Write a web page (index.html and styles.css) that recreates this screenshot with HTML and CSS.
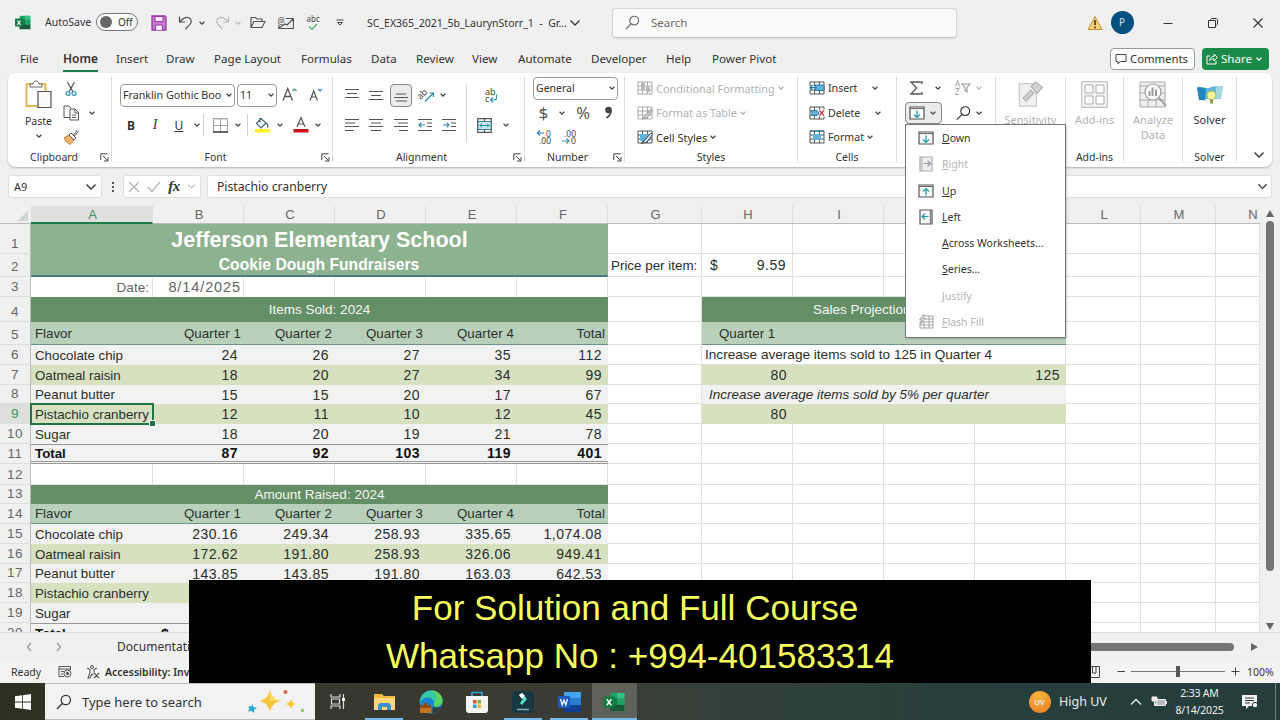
FILE: index.html
```html
<!DOCTYPE html>
<html lang="en">
<head>
<meta charset="utf-8">
<title>SC_EX365_2021_5b_LaurynStorr_1 - Excel</title>
<link rel="stylesheet" href="styles.css">
</head>
<body>
<svg class="defs" aria-hidden="true">
  <symbol id="chev" viewBox="0 0 8 8"><path d="M1.6 2.8 4 5.2 6.4 2.8" fill="none" stroke="currentColor" stroke-width="1.3"/></symbol>
  <symbol id="chevL" viewBox="0 0 12 12"><path d="M1.5 3.5 6 8 10.500 3.500" fill="none" stroke="currentColor" stroke-width="1.3"/></symbol>
  <symbol id="launch" viewBox="0 0 9 9"><path d="M.8 7V.8H7.500M3 3l4.600 4.600M8 4v4H4" fill="none" stroke="#444"/></symbol>
  <symbol id="excel" viewBox="0 0 24 22"><path d="M7 1h16v20H7z" fill="#21a366"/><path d="M15 1h7a1 1 0 0 1 1 1v5h-8z" fill="#33c481"/><path d="M7 7h8v7H7z" fill="#107c41"/><path d="M7 14h16v7H7z" fill="#185c37"/><path d="M15 7h8v7h-8z" fill="#21a366"/><rect y="5" width="12" height="12" rx="1" fill="#107c41"/><path d="m3.500 8 5 6.500M8.500 8l-5 6.500" stroke="#fff" stroke-width="1.600"/></symbol>
  <symbol id="fillDown" viewBox="0 0 16 14"><path d="M1 1h14v12H1z" fill="#fafafa" stroke="#555" stroke-width="1.200"/><path d="M1 2.600h14" stroke="#666"/><path d="M8 4.500v7M5 8.500l3 3 3-3" fill="none" stroke="#1b98a8" stroke-width="1.200"/></symbol>
  <symbol id="fillUp" viewBox="0 0 16 14"><path d="M1 1h14v12H1z" fill="#fafafa" stroke="#555" stroke-width="1.200"/><path d="M1 2.500h14" stroke="#666"/><path d="M8 11.500v-7M5 7.500l3-3 3 3" fill="none" stroke="#1b98a8" stroke-width="1.200"/></symbol>
  <symbol id="fillLeft" viewBox="0 0 14 16"><path d="M1 1h12v14H1z" fill="#fafafa" stroke="#555" stroke-width="1.200"/><path d="M11.500 1v14" stroke="#888" stroke-width="1.500"/><path d="M9.500 7.500H3M6 4.500l-3 3 3 3" fill="none" stroke="#1b98a8" stroke-width="1.200"/></symbol>
  <symbol id="fillRight" viewBox="0 0 14 16"><path d="M1 1h12v14H1z" fill="#f1f1f1" stroke="#aaa" stroke-width="1.200"/><path d="M3 1v14" stroke="#aaa"/><path d="M4.500 7.500h7M8.500 4.500l3 3-3 3" fill="none" stroke="#999" stroke-width="1.200"/></symbol>
  <symbol id="flash" viewBox="0 0 16 16"><path d="M7 2h8v12H2V8h13M6 8v6M11 2v12M2 11h13M7 5h8" fill="none" stroke="#a5a5a5"/><path d="M5 1 1.500 6H4L2.500 10 7.500 4.500H5L7 1z" fill="#ddd" stroke="#999" stroke-width=".8"/></symbol>
  <symbol id="table" viewBox="0 0 16 14"><path d="M1 1h14v12H1zM1 5h14M1 9h14M5.500 1v12M10.500 1v12" fill="none" stroke="currentColor"/></symbol>
  <symbol id="mag" viewBox="0 0 16 16"><circle cx="9.800" cy="6" r="4.700" fill="none" stroke="currentColor" stroke-width="1.200"/><path d="M6.400 9.500 1 15" stroke="currentColor" stroke-width="1.300"/></symbol>
</svg>

<header class="titlebar">
  <svg class="mid" width="16" height="15"><use href="#excel"/></svg>
  <span class="autosave">AutoSave</span>
  <span class="toggle mid"><i></i>Off</span>
  <svg class="mid" width="16" height="16" viewBox="0 0 16 16"><path d="M1 1h13l1 1v13H1z" fill="#c77bd0" stroke="#93389f" stroke-width="1.300"/><path d="M4 1.500h8v5H4z" fill="#f7e9f9" stroke="#93389f"/><path d="M4.500 15v-5h7v5" fill="#f7e9f9" stroke="#93389f"/></svg>
  <svg class="mid" width="16" height="16" viewBox="0 0 16 16"><path d="M1.500 1.500v5.500H7M1.800 6.800C5 2.500 10 1 12.500 4c2.500 3.300-.5 5.500-5 10" fill="none" stroke="#505050" stroke-width="1.200"/></svg>
  <svg class="mid ch"><use href="#chev"/></svg>
  <svg class="mid" width="16" height="16" viewBox="0 0 16 16"><path d="M14.500 1.500v5.500H9M14.200 6.800C11 2.500 6 1 3.500 4 1 7.300 4 9.500 8.500 14" fill="none" stroke="#b9b9b9" stroke-width="1.200"/></svg>
  <svg class="mid ch dim"><use href="#chev"/></svg>
  <svg class="mid" width="16" height="13" viewBox="0 0 16 13"><path d="M1 11.500v-10h4.500L7 3h5v2.500M1 11.500l3-6h11l-3 6z" fill="none" stroke="#505050" stroke-width="1.100"/></svg>
  <svg class="mid" width="16" height="14" viewBox="0 0 16 14"><path d="M8 2.500h7.400v10H.8V9M1 12l6-4 2 1 6-6" fill="none" stroke="#505050" stroke-width="1.100"/><text x="-.5" y="8" class="at">@</text></svg>
  <svg class="mid" width="16" height="18" viewBox="0 0 16 18"><text x="1.500" y="8" class="abc">abc</text><path d="m4 12.500 3 3 5-5.500" fill="none" stroke="#4aae68" stroke-width="1.200"/></svg>
  <svg class="mid" width="8" height="8" viewBox="0 0 8 8"><path d="M.5 1h7M1.500 3.500 4 6l2.500-2.500z" fill="none" stroke="#444"/></svg>
  <i></i>
  <span class="docname">SC_EX365_2021_5b_LaurynStorr_1&nbsp; -&nbsp; Gr...</span>
  <svg class="mid" width="12" height="12"><use href="#chevL"/></svg>
  <i></i>
  <div class="search"><svg width="15" height="15"><use href="#mag"/></svg><span>Search</span></div>
  <i></i>
  <svg class="mid" width="16" height="16" viewBox="0 0 16 16"><path d="M8 1.500 15 14.500H1z" fill="#f6d27a" stroke="#c98a2b"/><path d="M8 5v5M8 11.500v1.800" stroke="#333" stroke-width="1.600"/></svg>
  <span class="avatar mid">P</span>
  <i></i>
  <svg class="mid" width="10" height="10"><path d="M.5 5.500h9" stroke="#333"/></svg>
  <svg class="mid" width="10" height="10" viewBox="0 0 10 10"><path d="M.5 2.500h7v7h-7zM2.500 2.500V1.500l1-1h5l1 1v5l-1 1h-1" fill="none" stroke="#333"/></svg>
  <svg class="mid" width="10" height="10" viewBox="0 0 10 10"><path d="m.5.5 9 9m0-9-9 9" stroke="#333" stroke-width="1.100"/></svg>
</header>

<nav class="tabs">
  <span>File</span><span class="active">Home</span><span>Insert</span><span>Draw</span><span>Page Layout</span><span>Formulas</span><span>Data</span><span>Review</span><span>View</span><span>Automate</span><span>Developer</span><span>Help</span><span>Power Pivot</span>
  <div class="btn comments"><svg width="12" height="12" viewBox="0 0 12 12"><path d="M1 1.500h10v7H5.500L3 10.800V8.500H1z" fill="none" stroke="#444"/></svg>Comments</div>
  <div class="btn share"><svg width="12" height="13" viewBox="0 0 12 13"><path d="M4 4H1v8h9V9M3.500 8.500c.5-3 2.500-4 4.500-4V2l3.500 3.500L8 9V6.800c-2 0-3.500.5-4.500 1.700z" fill="none" stroke="#fff"/></svg>Share<svg class="ch"><use href="#chev"/></svg></div>
</nav>

<section class="ribbon">
  <div class="group clipboard">
    <div class="clip">
      <div class="big">
        <svg width="27" height="29" viewBox="0 0 27 29"><path d="M1.500 4h19v22h-19z" fill="#fff" stroke="#e8b65a" stroke-width="2"/><path d="M5 7V4h3c0-4 6-4 6 0h3v3z" fill="#fff" stroke="#666"/><path d="M13 11.500h13v16H13z" fill="#fafafa" stroke="#555" stroke-width="1.200"/></svg>
        <span>Paste</span><svg class="ch"><use href="#chev"/></svg>
      </div>
      <div class="small">
        <svg width="12" height="16" viewBox="0 0 12 16"><path d="m2.500 1 5.500 10M9.500 1 4 11" stroke="#555" stroke-width="1.200"/><circle cx="3" cy="12.500" r="2" fill="none" stroke="#2c8fc0" stroke-width="1.200"/><circle cx="9" cy="12.500" r="2" fill="none" stroke="#2c8fc0" stroke-width="1.200"/></svg><i></i>
        <svg width="16" height="16" viewBox="0 0 16 16"><path d="M7 12.500H1V1h5l2 2M7 4h5l3.500 3.500V15H7zM12 4v4h3.500M9 10h4M9 12.500h4" fill="none" stroke="#555"/></svg><svg class="ch"><use href="#chev"/></svg>
        <svg width="16" height="16" viewBox="0 0 16 16"><path d="M1 9 6 6l5 5-4 4.500c-2-1-4.500-3-6-6.500z" fill="#f3b56d" stroke="#cf7a22"/><path d="m6 6 5 5 2-2-5-5zM10.500 6 14 1.500l1.300 1.300L11.500 7z" fill="#fff" stroke="#555"/></svg><i></i>
      </div>
    </div>
    <div class="label">Clipboard</div><svg class="launch"><use href="#launch"/></svg>
  </div>

  <div class="group font two">
    <div class="r fr1"><span class="box">Franklin Gothic Boo<svg class="ch"><use href="#chev"/></svg></span><span class="box">11<svg class="ch"><use href="#chev"/></svg></span>
      <svg class="mid" width="16" height="16" viewBox="0 0 16 16"><path d="m1 13.500 4.700-12 4.700 12M2.700 9.500h6" fill="none" stroke="#555" stroke-width="1.300"/><path d="m10.500 4 2-2 2 2" fill="none" stroke="#2b88b0" stroke-width="1.100"/></svg>
      <svg class="mid" width="14" height="16" viewBox="0 0 14 16"><path d="m1 13.500 3.700-9.500 3.700 9.500M2.500 10h4.500" fill="none" stroke="#555" stroke-width="1.200"/><path d="m9 2 2 2 2-2" fill="none" stroke="#2b88b0" stroke-width="1.100"/></svg></div>
    <div class="r fr2"><b class="mid">B</b><em class="mid">I</em><u class="mid">U</u><svg class="mid ch"><use href="#chev"/></svg><i class="vs"></i>
      <svg class="mid" width="15" height="15" viewBox="0 0 15 15"><path d="M.5.5h14v13M.5.5v13M7.500.5v13M.5 7.500h14" fill="none" stroke="#777" stroke-dasharray="1 1"/><path d="M.5 1.500v12M14.500 1.500v12M7.500 1v13M1 7.500h13M1 1h13" fill="none" stroke="#999" stroke-width=".7"/><path d="M0 14h15" stroke="#333" stroke-width="1.500"/></svg>
      <svg class="mid ch"><use href="#chev"/></svg><i class="vs"></i>
      <svg class="mid" width="16" height="16" viewBox="0 0 16 16"><path d="M7 1.500 12 6l-5 5-4.500-4.500zM6 1v4M12 6c2 1 2 3 1.500 4.500" fill="none" stroke="#3b6577" stroke-width="1.200"/><path d="M1 12h15v3.500H1z" fill="#f8f32b"/></svg>
      <svg class="mid ch"><use href="#chev"/></svg>
      <svg class="mid" width="16" height="16" viewBox="0 0 16 16"><path d="m4 10 4-9.500L12 10M5.500 7h5" fill="none" stroke="#555" stroke-width="1.200"/><path d="M.5 12h15v3.500H.5z" fill="#c4141c"/></svg>
      <svg class="mid ch"><use href="#chev"/></svg></div>
    <div class="label">Font</div><svg class="launch"><use href="#launch"/></svg>
  </div>

  <div class="group align two">
    <div class="r al1">
      <svg class="mid ln" viewBox="0 0 14 14"><path d="M0 1.500h14M2 5.500h10M0 9.500h14"/></svg>
      <svg class="mid ln" viewBox="0 0 14 14"><path d="M0 3.500h14M2 7.500h10M0 11.500h14"/></svg>
      <span class="mid pressed"><svg class="ln" viewBox="0 0 14 14"><path d="M2 6h10M0 9.500h14M2 13h11"/></svg></span>
      <svg class="mid" width="17" height="16" viewBox="0 0 17 16"><text x="-1" y="9" class="ab" transform="rotate(-45 5 8)">ab</text><path d="M6 14.500 14.500 6M10.500 6h4v4" fill="none" stroke="#2b88b0" stroke-width="1.200"/></svg>
      <svg class="mid ch"><use href="#chev"/></svg><i></i>
      <svg class="mid" width="14" height="17" viewBox="0 0 14 17"><text x="1" y="7.500" class="ab">ab</text><text x="1" y="15" class="ab">c</text><path d="M12.500 7.500v3.500c0 1.500-1 2-2.500 2H6.500M9 10.500 6.500 13l2.500 2.500" fill="none" stroke="#2b9ab0" stroke-width="1.100"/></svg></div>
    <div class="r al2">
      <svg class="mid ln" viewBox="0 0 14 14"><path d="M0 1.500h14M0 5h10M0 8.500h14M0 12.500h9"/></svg>
      <svg class="mid ln" viewBox="0 0 14 14"><path d="M0 1.500h14M2 5h10M0 8.500h14M2 12.500h10"/></svg>
      <svg class="mid ln" viewBox="0 0 14 14"><path d="M0 1.500h14M4 5h10M0 8.500h14M5 12.500h9"/></svg>
      <svg class="mid ln" viewBox="0 0 14 14"><path d="M0 1.500h14M9 5h5M9 8.500h5M0 12.500h14"/><path class="bl" d="M7 7H1m2.300-2.300L1 7l2.300 2.300"/></svg>
      <svg class="mid ln" viewBox="0 0 14 14"><path d="M0 1.500h14M9 5h5M9 8.500h5M0 12.500h14"/><path class="bl" d="M1 7h6M4.700 4.700 7 7 4.700 9.300"/></svg><i></i>
      <svg class="mid" width="15" height="15" viewBox="0 0 15 15"><path d="M.7.7h13.600v13.600H.7zM7.500 1v2M7.500 12v2" fill="#fff" stroke="#555" stroke-width="1.200"/><path d="M1 3.500h13v8H1z" fill="#cdeaf3" stroke="#3c7d90"/><path d="M3 7.500h9M5 5.500l-2 2 2 2M10 5.500l2 2-2 2" fill="none" stroke="#1b87a0"/></svg>
      <svg class="mid ch"><use href="#chev"/></svg></div>
    <i class="vline"></i>
    <div class="label">Alignment</div><svg class="launch"><use href="#launch"/></svg>
  </div>

  <div class="group number three">
    <div class="r nu1"><span class="box">General<svg class="ch"><use href="#chev"/></svg></span></div>
    <div class="r nu2"><span class="mid sym">$</span><svg class="mid ch"><use href="#chev"/></svg><span class="mid sym">%</span><svg class="mid" width="9" height="14" viewBox="0 0 9 14"><circle cx="4.500" cy="4" r="3.300" fill="#444"/><path d="M7 4.500c0 3-1.500 5.500-4.500 7.500" fill="none" stroke="#444" stroke-width="1.700"/></svg></div>
    <div class="r nu3"><svg class="mid" width="16" height="16" viewBox="0 0 16 16"><text x="10" y="7.500" class="dg">0</text><text x="3" y="15" class="dg">.00</text><path d="M8 4H1.500M4 1.500 1.500 4 4 6.500" fill="none" stroke="#2b88b0" stroke-width="1.200"/></svg><svg class="mid" width="16" height="16" viewBox="0 0 16 16"><text x="3" y="7.500" class="dg">.00</text><text x="10" y="15" class="dg">0</text><path d="M1 12h7M5.500 9.500 8 12l-2.500 2.500" fill="none" stroke="#2b9ab0" stroke-width="1.200"/></svg></div>
    <div class="label">Number</div><svg class="launch"><use href="#launch"/></svg>
  </div>

  <div class="group styles three">
    <div class="r item off"><svg width="16" height="14" viewBox="0 0 16 14"><use href="#table"/><path d="M4 2h4v7H4zM9 6h4v5H9z" fill="#b5b5b5"/></svg><span>Conditional Formatting</span><svg class="ch"><use href="#chev"/></svg></div>
    <div class="r item off"><svg width="16" height="14" viewBox="0 0 16 14"><use href="#table"/><path d="M8 10 14 3l1.500 1.500L10 12l-5 1z" fill="#ccc" stroke="#999"/></svg><span>Format as Table</span><svg class="ch"><use href="#chev"/></svg></div>
    <div class="r item"><svg width="16" height="14" viewBox="0 0 16 14"><use href="#table"/><path d="M3 4h10v7H3z" fill="#5fb4dc"/><path d="M7 11 14 3l1.500 1.500L10 12l-6 1.500z" fill="#d9eef8" stroke="#444"/></svg><span>Cell Styles</span><svg class="ch"><use href="#chev"/></svg></div>
    <div class="label">Styles</div>
  </div>

  <div class="group cells three">
    <div class="r item"><svg width="16" height="14" viewBox="0 0 16 14"><use href="#table"/><path d="M6 4h9v5.500H6z" fill="#5fb4dc" stroke="#2b7da0"/><path d="M0 5h5.500v3.500H0z" fill="#fff"/><path d="M8 6.700H1M3.500 4.200 1 6.700l2.500 2.500" fill="none" stroke="#1779a5" stroke-width="1.200"/></svg><span>Insert</span><svg class="ch w1"><use href="#chev"/></svg></div>
    <div class="r item"><svg width="16" height="14" viewBox="0 0 16 14"><use href="#table"/><path d="M8 3.500h8v7H8z" fill="#fff"/><path d="M3 4.500h5L10 7 8 9.500H3z" fill="#5fb4dc" stroke="#2b7da0"/><path d="m10.500 4.500 4.500 5m0-5-4.500 5" stroke="#d13438" stroke-width="1.200"/></svg><span>Delete</span><svg class="ch w2"><use href="#chev"/></svg></div>
    <div class="r item"><svg width="16" height="14" viewBox="0 0 16 14"><use href="#table"/><path d="M4 4h8v6H4z" fill="#5fb4dc"/><path d="M2 1h12M2 0v2M14 0v2" stroke="#1779a5"/></svg><span>Format</span><svg class="ch w3"><use href="#chev"/></svg></div>
    <div class="label">Cells</div>
  </div>

  <div class="group editing three">
    <div class="r ed"><svg class="mid" width="13" height="14" viewBox="0 0 13 14"><path d="M12 3V1H1l5.500 6L1 13h11v-2" fill="none" stroke="#555" stroke-width="1.300"/></svg><svg class="mid ch"><use href="#chev"/></svg>
      <svg class="mid" width="16" height="16" viewBox="0 0 16 16"><text x="0" y="7" class="az">A</text><text x="0" y="15" class="az">Z</text><path d="M7 4h8l-3 3.500V12l-2-1.500v-3z" fill="none" stroke="#999" stroke-width="1.100"/></svg><svg class="mid ch dim"><use href="#chev"/></svg></div>
    <div class="r ed2"><span class="fillbtn"><svg width="16" height="14"><use href="#fillDown"/></svg><svg class="ch"><use href="#chev"/></svg></span>
      <svg class="mid" width="15" height="16"><use href="#mag"/></svg><svg class="mid ch"><use href="#chev"/></svg></div>
  </div>

  <div class="group tall off">
    <svg width="27" height="30" viewBox="0 0 27 30"><path d="M1 3h19v25H1z" fill="#f0f0f0" stroke="#bbb"/><path d="m5 19 9-9 3.500 3.500-9 9z" fill="#ccc" stroke="#999"/><path d="m14 6 5-5 8 6-6 7z" fill="#ccc" stroke="#999"/><path d="m17 8 4-5M20 10l4-5" stroke="#eee"/></svg><span>Sensitivity</span></div>
  <div class="group tall off">
    <svg width="27" height="27" viewBox="0 0 27 27"><path d="M.7.7h25.600v25.600H.7z" fill="#f5f5f5" stroke="#b5b5b5"/><path d="M4 4h8v8H4zM15 4h8v8h-8zM4 15h8v8H4zM15 15h8v8h-8z" fill="#fff" stroke="#aaa"/></svg><span>Add-ins</span><div class="label">Add-ins</div></div>
  <div class="group tall off">
    <svg width="28" height="27" viewBox="0 0 28 27"><path d="M1 1h25v25H1zM1 5h25M1 12h25M1 19h25M9 19v7M17 19v7" fill="#eee" stroke="#aaa"/><circle cx="14" cy="11" r="8" fill="#fff" stroke="#999" stroke-width="1.200"/><path d="M10.500 10v5M13.500 6.500V15M17 8.500V15" stroke="#999" stroke-width="2"/><path d="m20 17 7 8" stroke="#999" stroke-width="1.800"/></svg><span>Analyze<br>Data</span></div>
  <div class="group tall">
    <svg width="28" height="26" viewBox="0 0 28 26"><path d="M1 6c6-2 9 2 13 0s8-1 13-1l-2 12c-6 2-7-2-12 0s-6 1-9 1z" fill="#65b9dc"/><path d="M1 6c4-1 7 1 9 1l-1 12c-2 0-3-1-6 0z" fill="#2387bf"/><path d="M20 6c3-1 5-1 7-1l-2 12-5 0z" fill="#a4d8e6"/><circle cx="15.500" cy="14" r="4.500" fill="#eef29a" stroke="#a9b84d"/><path d="M14 18h3v4h-3z" fill="#8c9b55"/></svg><span>Solver</span><div class="label">Solver</div></div>
  <div class="tail"><svg width="12" height="12"><use href="#chevL"/></svg></div>
</section>

<section class="formulabar">
  <div class="fb name">A9<svg width="12" height="12"><use href="#chevL"/></svg></div>
  <svg class="mid" width="4" height="12"><path d="M1 1h2v2H1zM1 5h2v2H1zM1 9h2v2H1z" fill="#555"/></svg>
  <div class="fb fx"><svg width="12" height="12" viewBox="0 0 12 12"><path d="m1 1 10 10M11 1 1 11" stroke="#b0b0b0" stroke-width="1.200"/></svg><svg width="14" height="12" viewBox="0 0 14 12"><path d="m1 6 4 4.500L13 1" fill="none" stroke="#b0b0b0" stroke-width="1.200"/></svg><em>fx</em><svg class="lt" width="9" height="9"><use href="#chevL"/></svg></div>
  <div class="fb text">Pistachio cranberry<svg width="11" height="11"><use href="#chevL"/></svg></div>
</section>

<main class="work">
  <div class="sheet" id="sheet"></div>
  <div class="vscroll"><svg width="8" height="7"><path d="M0 7 4 0l4 7z" fill="#666"/></svg><i></i><svg width="8" height="7"><path d="M0 0h8L4 7z" fill="#666"/></svg></div>
</main>

<div class="sheetbar">
  <svg width="6" height="10"><path d="M5 1 1.500 5 5 9" fill="none" stroke="#999" stroke-width="1.300"/></svg>
  <svg width="6" height="10"><path d="m1 1 3.500 4L1 9" fill="none" stroke="#999" stroke-width="1.300"/></svg>
  <span>Documentation</span>
  <i class="hthumb"></i><svg width="7" height="8"><path d="M0 0v8l7-4z" fill="#666"/></svg>
</div>

<div class="status">
  <span>Ready</span>
  <svg class="mid" width="14" height="13" viewBox="0 0 14 13"><path d="M6 11.500H1v-10h11.500V5M1 4h11.500M3 6.500h3M3 9h2" fill="none" stroke="#555"/><circle cx="9.500" cy="8.500" r="3.500" fill="#eee" stroke="#555"/><circle cx="9.500" cy="8.500" r="1.500" fill="#444"/></svg>
  <svg class="mid" width="14" height="14" viewBox="0 0 14 14"><circle cx="6" cy="2" r="1.500" fill="none" stroke="#555"/><path d="m1 3 3 1.500v3L2 13h2l2-4 1 1M11 3 8 4.500v3M8 8l5 5m0-5-5 5" fill="none" stroke="#555" stroke-width="1.100"/></svg>
  <b>Accessibility: Investigate</b>
  <i></i>
  <svg width="12" height="12"><path d="M.5.5h11v11H.5zM4.500 1v6H8V1" fill="none" stroke="#444"/></svg>
  <svg class="mid" width="9" height="9"><path d="M.5 4.500H8" stroke="#444"/></svg>
  <span class="zoomer"><i></i></span>
  <svg class="mid" width="9" height="9"><path d="M.5 4.500h8M4.500.5v8" stroke="#444"/></svg>
  <span class="pct">100%</span>
</div>

<footer class="taskbar">
  <svg class="mid" width="16" height="16" viewBox="0 0 16 16"><path d="m0 2.300 7-1v6.300H0zM7.800 1.200 16 0v7.600H7.800zM0 8.400h7v6.300l-7-1zM7.800 8.400H16V16l-8.200-1.200z" fill="#fff"/></svg>
  <div class="tsearch"><svg width="16" height="16"><use href="#mag"/></svg><span>Type here to search</span>
    <svg width="60" height="24" viewBox="0 0 60 24"><path d="M23 0c2 7 4 9 10.500 11-6.500 2-8.500 4-10.500 11-2-7-4-9-10.500-11C19 9 21 7 23 0z" fill="#f4c637"/><path d="M23 0c2 7 4 9 10.500 11H23z" fill="#fbdc6a"/><path d="M44 9c1 3 2 4 5 5-3 1-4 2-5 5-1-3-2-4-5-5 3-1 4-2 5-5z" fill="#f4c637"/><path d="m5 14 1.500 3 3.500 1-3 2v3l-2.500-2L1 21.500l1.500-3-1-2.500 3 .5z" fill="#2aa8d8"/><circle cx="38.500" cy="2" r="2" fill="#d8664b"/><circle cx="55.500" cy="20.500" r="1.700" fill="#92c46d"/></svg></div>
  <svg class="mid" width="16" height="15" viewBox="0 0 16 15"><path d="M1 0v3h9V0M1 15v-3h9v3M1.500 5h8v5h-8zM13.500 0v15" fill="none" stroke="#ddd" stroke-width="1.200"/><path d="M12 4h3v3h-3z" fill="#eee"/></svg>
  <span class="app on w38"><svg width="21" height="18" viewBox="0 0 21 18"><path d="M0 1h8l2 2h11v14H0z" fill="#f0b93c"/><path d="M0 5h21v12H0z" fill="#fcd879"/><path d="M4 17v-5l2-2h9l2 2v5h-4v-3H8v3z" fill="#3893cf"/></svg></span>
  <span class="app"><svg width="24" height="24" viewBox="0 0 24 24"><circle cx="12" cy="12" r="11.500" fill="#1a84d1"/><path d="M1 10C3 3 8 .5 12 .5c7 0 11.500 5 11.500 10 0 4-3 6-6 6-4 0-3-2-2.500-4 0-3-3-5-6-5-4 0-7 2-8 6z" fill="#38c9a4"/><path d="M12 .5c7 0 11.500 5 11.500 10 0 4-3 6-6 6-3 0-2-2-2-3 4-5 1-11-3.500-13z" fill="#5ad45a"/><path d="M14 16c2 2 5 2 8.500.500C20 21 17 23.500 13 23.500z" fill="#35403a"/><path d="M1 15h11v8H1z" fill="#c4771f"/><path d="M1 15h11v3H1zM5 13h3v2H5z" fill="#8b4f16"/></svg></span>
  <span class="app"><svg width="22" height="22" viewBox="0 0 22 22"><path d="M6 5V1.500h10V5" fill="none" stroke="#2aa6d2" stroke-width="1.700"/><path d="M0 5h22v14q0 3-3 3H3q-3 0-3-3z" fill="#f4f4f4"/><path d="M7 9h3.500v3.500H7z" fill="#e2512b"/><path d="M11.500 9H15v3.500h-3.500z" fill="#78b52b"/><path d="M7 13.500h3.500V17H7z" fill="#2a9fdb"/><path d="M11.500 13.500H15V17h-3.500z" fill="#f1b41d"/></svg></span>
  <span class="app on w38"><svg width="22" height="22" viewBox="0 0 22 22"><rect width="22" height="22" rx="4" fill="#173743"/><path d="m7 4 3-2 5 6-5 6-2-2 3-4z" fill="#5be1c6"/><path d="m7 4 3-2 3 3-3 3z" fill="#fff"/><path d="M5 18.500h12" stroke="#8ab0be" stroke-width="1.500"/></svg></span>
  <span class="app on w38"><svg width="23" height="20" viewBox="0 0 23 20"><path d="M6 0h16l1 1v18l-1 1H6z" fill="#2b7cd3"/><path d="M6 0h16l1 1v5H6z" fill="#41a5ee"/><path d="M6 13h17v6l-1 1H6z" fill="#103f91"/><rect y="4" width="12" height="12" rx="1" fill="#185abd"/><path d="m2.500 7 1.700 6L6 8l1.800 5 1.700-6" fill="none" stroke="#fff" stroke-width="1.200"/></svg></span>
  <span class="app on cur"><svg width="23" height="20"><use href="#excel"/></svg></span>
  <i></i>
  <span class="uv mid">UV</span><span class="wx">High UV</span>
  <svg class="mid" width="12" height="12"><path d="m1 8.500 5-5 5 5" fill="none" stroke="#eee" stroke-width="1.300"/></svg>
  <svg class="mid" width="15" height="12" viewBox="0 0 15 12"><path d="M4.500 3.500h9v6h-9z" fill="#bbb" stroke="#eee"/><path d="M0 1h5v4H0zM2.500 5v4.500H5M14.500 5v3" fill="#eee" stroke="#eee"/></svg>
  <div class="clock">2:33 AM<br>8/14/2025</div>
  <svg class="mid" width="16" height="16" viewBox="0 0 16 16"><path d="M0 1h15v11H7l-3 3v-3H0z" fill="#f2f2f2"/><path d="M3 4h9M3 6.500h9M3 9h5" stroke="#263f3c"/><circle cx="13" cy="11" r="2.700" fill="#f2f2f2" stroke="#263f3c"/></svg>
  <i class="peek"></i>
</footer>

<div class="menu">
  <div><svg width="16" height="14"><use href="#fillDown"/></svg><span><u>D</u>own</span></div>
  <div class="off"><svg width="14" height="16"><use href="#fillRight"/></svg><span><u>R</u>ight</span></div>
  <div><svg width="16" height="14"><use href="#fillUp"/></svg><span><u>U</u>p</span></div>
  <div><svg width="14" height="16"><use href="#fillLeft"/></svg><span><u>L</u>eft</span></div>
  <div><i></i><span><u>A</u>cross Worksheets...</span></div>
  <div><i></i><span><u>S</u>eries...</span></div>
  <div class="off"><i></i><span><u>J</u>ustify</span></div>
  <div class="off"><svg width="16" height="16"><use href="#flash"/></svg><span><u>F</u>lash Fill</span></div>
</div>

<div class="banner"><div class="l1">For Solution and Full Course</div><div class="l2">Whatsapp No : +994-401583314</div></div>
<script src="sheet.js"></script>
</body>
</html>
```
FILE: sheet.js
```js
const COLS = 'ABCDEFGHIJKLMN'.split('');
const Q = ['Flavor', 'Quarter 1', 'Quarter 2', 'Quarter 3', 'Quarter 4', 'Total'];

// Each row: height, row kind for A:F, texts for A:F, then wide cells for the rest.
const ROWS = [
  { h: 30, kind: 'title', span: 'Jefferson Elementary School' },
  { h: 23, kind: 'subtitle', span: 'Cookie Dough Fundraisers', side: [['lab', 1, 'Price per item:'], ['money', 1, '<s>$</s>9.59']] },
  { h: 20, kind: 'date', cells: ['Date:', '8/14/2025', '', '', '', ''] },
  { h: 25, kind: 'band', span: 'Items Sold: 2024', side: [['', 1, ''], ['band', 4, 'Sales Projections: 2025']] },
  { h: 23, kind: 'heads', cells: Q, side: [['', 1, ''], ['heads q1', 4, 'Quarter 1']] },
  { h: 20, kind: 'light', cells: ['Chocolate chip', 24, 26, 27, 35, 112], side: [['', 1, ''], ['note', 4, 'Increase average items sold to 125 in Quarter 4']] },
  { h: 20, kind: 'green', cells: ['Oatmeal raisin', 18, 20, 27, 34, 99], side: [['', 1, ''], ['green num', 1, '80'], ['green num', 3, '125']] },
  { h: 19, kind: 'light', cells: ['Peanut butter', 15, 15, 20, 17, 67], side: [['', 1, ''], ['light note2', 4, 'Increase average items sold by 5% per quarter']] },
  { h: 20, kind: 'green', cells: ['Pistachio cranberry', 12, 11, 10, 12, 45], side: [['', 1, ''], ['green num', 1, '80'], ['green', 3, '']], sel: true },
  { h: 20, kind: 'light', cells: ['Sugar', 18, 20, 19, 21, 78] },
  { h: 20, kind: 'total', cells: ['Total', 87, 92, 103, 119, 401] },
  { h: 21, kind: 'blank', cells: ['', '', '', '', '', ''] },
  { h: 19, kind: 'band', span: 'Amount Raised: 2024' },
  { h: 20, kind: 'heads', cells: Q },
  { h: 20, kind: 'light', cells: ['Chocolate chip', '230.16', '249.34', '258.93', '335.65', '1,074.08'] },
  { h: 20, kind: 'green', cells: ['Oatmeal raisin', '172.62', '191.80', '258.93', '326.06', '949.41'] },
  { h: 19, kind: 'light', cells: ['Peanut butter', '143.85', '143.85', '191.80', '163.03', '642.53'] },
  { h: 20, kind: 'green', cells: ['Pistachio cranberry', '', '', '', '', ''] },
  { h: 20, kind: 'light', cells: ['Sugar', '', '', '', '', ''] },
  { h: 20, kind: 'total last', cells: ['Total', '<s>$</s>834.33', '', '', '', ''] },
];

const cell = (cls, span, html) =>
  `<div class="cell ${cls}"${span > 1 ? ` style="grid-column:span ${span}"` : ''}><span>${html}</span></div>`;

let out = '<div class="row colhead"><div class="corner"></div>' +
  COLS.map(c => `<div class="${c === 'A' ? 'on' : ''}">${c}</div>`).join('') + '</div>';

ROWS.forEach((r, i) => {
  out += `<div class="row" style="height:${r.h}px"><div class="rh${r.sel ? ' on' : ''}">${i + 1}</div>`;
  if (r.span) out += cell(r.kind, 6, r.span);
  else r.cells.forEach((t, j) => {
    out += cell(`${r.kind} ${j ? 'num' : 'first'}${r.sel && !j ? ' sel' : ''}`, 1, t);
  });
  let used = 0;
  (r.side || []).forEach(([cls, span, t]) => { out += cell(cls, span, t); used += span; });
  for (; used < 8; used++) out += cell('', 1, '');
  out += '</div>';
});
document.getElementById('sheet').innerHTML = out;
```
FILE: styles.css
```css
* { box-sizing: border-box; }
body { margin: 0; width: 1280px; height: 720px; overflow: hidden; position: relative; display: flex; flex-direction: column; background: #f0f0f0; font: 10.5px "Noto Sans", "Open Sans", sans-serif; color: #333; }
svg { display: block; flex: none; overflow: visible; }
.defs { position: absolute; width: 0; height: 0; }
.ch { width: 8px; height: 8px; color: #444; }
.dim { color: #b9b9b9; }
.mid { justify-self: center; align-self: center; }

.titlebar { height: 45px; flex: none; display: grid; align-items: center; grid-template-columns: 45px 47px 50px 33px 21px 11px 29px 3px 38px 17px 37px 17px 19px 200px 16px 29px 345px 123px 30px 24px 11px 45px 45px 45px; }
.autosave { font-size: 10.5px; margin-top: -2px; }
.toggle { width: 42px; height: 18px; border: 1px solid #777; border-radius: 9px; display: flex; align-items: center; gap: 6px; padding-left: 3px; background: #fafafa; font-size: 10px; margin-top: -1px; }
.toggle i { width: 12px; height: 12px; border-radius: 50%; background: #666; }
.at { font: 8px "Noto Sans", sans-serif; fill: #444; }
.abc { font: 8px "Noto Sans", sans-serif; fill: #444; }
.docname { font-size: 10.5px; white-space: nowrap; }
.search { height: 30px; border: 1px solid #d5d5d5; border-bottom-color: #c6c6c6; border-radius: 4px; background: #fafafa; display: flex; align-items: center; padding-left: 12px; gap: 11px; font-size: 11.5px; color: #6a6a6a; box-shadow: 0 1px 2px #0001; }
.avatar { width: 23px; height: 23px; border-radius: 50%; background: #04507f; color: #d6e6f0; display: grid; place-items: center; font-size: 10px; margin-top: -1px; }

.tabs { height: 28px; flex: none; padding: 0 0 1px 20px; display: grid; align-items: center; font-size: 11.600px; grid-template-columns: 43px 53px 50px 48px 87px 70px 45px 56px 46px 73px 75px 46px 398px 92px 67px; white-space: nowrap; }
.tabs .active { font-weight: 600; font-size: 12px; width: 35px; height: 24px; line-height: 21px; margin-top: 2px; border-bottom: 2px solid #1c7c45; }
.btn { height: 22px; border-radius: 4px; display: flex; align-items: center; gap: 3px; padding-left: 4px; }
.comments { width: 85px; border: 1px solid #999; background: #fdfdfd; font-size: 11.300px; }
.share { background: #1a8a48; color: #fff; gap: 3px; }
.share .ch { color: #fff; }

.ribbon { height: 94px; flex: none; margin: 0 8px; border-radius: 7px; background: #fff; box-shadow: 0 1px 2px #0004; display: grid; grid-template-columns: 104px 221px 192px 100px 173px 99px 99px 70px 58px 59px 54px 35px; }
.group { position: relative; border-right: 1px solid #dcdcdc; margin: 4px 0 5px; height: 85px; display: flex; flex-direction: column; }
.group > .label { position: absolute; left: 0; right: 0; bottom: -3px; text-align: center; color: #333; line-height: 16px; }
.launch { position: absolute; right: 2px; bottom: 0; width: 9px; height: 9px; }
.r { display: grid; align-items: center; flex: none; }
.two .r { height: 30px; }
.two { padding-top: 3px; }
.three .r { height: 24.500px; }
.three .r:first-child { margin-top: -1px; }
.off { color: #b2b2b2; }
.off .ch { color: #b2b2b2; }
.clip { display: grid; grid-template-columns: 53px 1fr; }
.clipboard > .label { right: 11px; }
.big { display: flex; flex-direction: column; align-items: center; padding: 3px 0 0 8px; }
.big span { line-height: 20px; margin-top: 2px; }
.big .ch { margin-top: 1px; }
.small { display: grid; grid-template: repeat(3, 24px) / 20px 22px; place-items: center; }
.box { height: 23px; border: 1px solid #999; border-radius: 4px; display: flex; align-items: center; justify-content: space-between; padding: 0 1px 0 2px; white-space: nowrap; overflow: hidden; }
.font .r { padding-left: 7px; }
.font > .label { right: 13px; }
.fr1 { grid-template-columns: 117px 40px 28px 24px; }
.fr1 .box { width: 115px; margin-left: 1px; font-size: 10.700px; }
.fr1 .box + .box { width: 40px; margin-left: 1px; }
.fr2 { grid-template-columns: 24px 24px 24px 12px 8px 18px 18px 2px 26px 9px 33px 2px; font-size: 12px; }
.fr2 em { font-family: "Liberation Serif", serif; font-size: 14px; }
.fr2 .vs { width: 1px; height: 22px; background: #d0d0d0; }
.ln { width: 14px; height: 14px; fill: none; stroke: #555; stroke-width: 1.100; }
.ln .bl { stroke: #2b88b0; }
.pressed { width: 22px; height: 23px; border: 1px solid #888; border-radius: 4px; background: #ececec; display: grid; place-items: center; }
.ab { font: 9px "Noto Sans", sans-serif; fill: #444; }
.al1, .al2 { padding-left: 7px; grid-template-columns: 24px 24px 26px 26px 5px 33px 26px; }
.al2 { grid-template-columns: 24px 24px 26px 22px 26px 9px 26px 18px; }
.vline { position: absolute; left: 133px; top: 7px; width: 1px; height: 58px; background: #d8d8d8; }
.align > .label { right: 14px; }
.nu1 { padding-left: 8px; }
.nu1 .box { width: 85px; }
.nu2 { padding-left: 10px; grid-template-columns: 17px 20px 22px 28px; }
.nu3 { padding-left: 7px; grid-template-columns: 24px 26px; }
.sym { font-size: 16.500px; line-height: 20px; color: #555; }
.dg { font: 8.500px "Noto Sans", sans-serif; fill: #444; }
.number > .label { right: 14px; }
.item { grid-auto-flow: column; justify-content: start; gap: 3px; padding-left: 12px; font-size: 10.900px; }
.item > svg:first-child { color: #555; }
.item.off > svg:first-child { color: #aaa; }
.item .ch { margin-left: -1px; }
.cells .item { font-size: 10.600px; padding-left: 11px; }
.cells .item .w1 { margin-left: 11px; }
.cells .item .w2 { margin-left: 11px; }
.ed { padding-left: 8px; grid-template-columns: 22px 22px 28px 3px; }
.ed2 { padding-left: 8px; grid-template-columns: 37px 43px 0; }
.ed2 .ch { margin-left: -12px; transform: none; }
.ed2 > .mid:not(.ch) { margin-left: 0; }
.fillbtn { width: 37px; height: 22px; border: 1px solid #888; border-radius: 4px; background: #ebebeb; display: flex; align-items: center; gap: 4px; padding-left: 3px; }
.fillbtn .ch { margin-left: 0; }
.az { font: 8px "Noto Sans", sans-serif; fill: #999; }
.tall { align-items: center; padding-top: 4px; text-align: center; font-size: 11px; line-height: 15px; }
.tall svg { height: 27px; }
.tall span { margin-top: 4px; }
.tall .label { font-size: 10.500px; }
.tail { display: flex; align-items: flex-end; justify-content: center; padding: 0 0 6px 8px; }

.formulabar { height: 39px; flex: none; padding: 0 8px; display: grid; grid-template-columns: 94px 21px 78px 6px 1065px; align-items: center; font-size: 12.200px; }
.fb { height: 23px; border: 1px solid #e0e0e0; border-radius: 3px; background: #fff; display: flex; align-items: center; justify-content: space-between; padding: 0 4px; }
.fb.name { padding-left: 5px; font-size: 11px; }
.fb.fx em { font: italic bold 15px "Liberation Serif", serif; letter-spacing: -.5px; }
.fb .lt { color: #999; }
.fb.text { grid-column: 5; padding: 0 3px 0 9px; }

.work { height: 426px; flex: none; display: grid; grid-template-columns: 1260px 20px; }
.sheet { height: 426px; background: #fff; overflow: hidden; font-family: "Liberation Sans", Arial, sans-serif; font-size: 13.300px; color: #2b2f2b; }
.row { display: grid; grid-template-columns: 31px 122px repeat(5, 91px) 94px repeat(4, 91px) 75px 75px 44px; }
.colhead { height: 18px; background: #f0f0f0; color: #666; line-height: 18px; font-size: 13px; text-align: center; border-bottom: 1px solid #bbb; }
.colhead > div + div { border-right: 1px solid #dedede; height: 17px; padding-left: 2px; }
.colhead > div:last-child { border-right: 0; padding-left: 30px; }
.colhead .on { background: #dfdfdf; color: #3c9260; border-bottom: 2px solid #1c7c45; height: 18px; }
.corner { background: linear-gradient(135deg, transparent 50%, #d4d4d4 50%) 18px 5px / 10px 10px no-repeat; }
.rh { background: #f0f0f0; color: #666; border-right: 1px solid #bbb; border-bottom: 1px solid #dedede; display: flex; align-items: flex-end; justify-content: center; font-size: 13.500px; letter-spacing: .4px; line-height: 18px; }
.rh.on { background: #dedede; color: #3c9260; }
.cell { border-right: 1px solid #e0e0e0; border-bottom: 1px solid #e0e0e0; display: flex; align-items: center; white-space: nowrap; min-width: 0; }
.cell s { text-decoration: none; }
.num { justify-content: flex-end; padding-right: 6px; font-size: 14px; letter-spacing: .5px; }
.first { padding-left: 4px; }
.title, .subtitle, .band, .heads, .light, .green, .total { border-right-color: transparent; }
.title { background: #8db28f; border: 0; justify-content: center; color: #fff; font-weight: bold; font-size: 21.500px; padding-top: 3px; }
.subtitle { background: #8db28f; border-bottom: 2px solid #467c86; justify-content: center; color: #fff; font-weight: bold; font-size: 15.700px; }
.date { color: #666; border-bottom: 0; justify-content: flex-end; padding-right: 3px; font-size: 13.600px; }
.date.num { padding-right: 2px; font-size: 14.500px; letter-spacing: .9px; }
.band { background: #648e66; border: 0; justify-content: center; color: #f4f8f4; font-size: 13.500px; }
.heads { background: #b8cfb9; border: 0; border-bottom: 1px solid #6a938a; }
.heads.num { padding-right: 3px; font-size: 13.300px; letter-spacing: .1px; }
.light { background: #f2f2f2; border: 0; }
.green { background: #d7e1c0; border: 0; }
.total { background: #f2f2f2; font-weight: bold; border: 0; border-top: 1px solid #999; border-bottom: 3px double #999; color: #111; }
.total.last { border-bottom: 0; }
.total.last.num span { width: 77px; display: flex; justify-content: space-between; }
.sel { position: relative; }
.sel::before { content: ""; position: absolute; inset: -1px -1px -1px -1px; border: 2px solid #217346; }
.sel::after { content: ""; position: absolute; right: -2px; bottom: -2px; width: 5px; height: 5px; background: #217346; outline: 1px solid #fff; }
.lab { padding-left: 3px; font-size: 13.400px; }
.money span { width: 76px; margin-left: 8px; display: flex; justify-content: space-between; font-size: 14px; letter-spacing: .5px; }
.q1 { padding-left: 17px; }
.note { padding-left: 3px; font-size: 13.600px; }
.note2 { padding-left: 7px; font-style: italic; font-size: 13.500px; }
.vscroll { background: #f0f0f0; display: flex; flex-direction: column; align-items: center; padding: 4px 0 2px; }
.vscroll i { width: 8px; height: 350px; margin: 4px 0 auto; border-radius: 4px; background: #757575; }

.sheetbar { height: 28px; flex: none; padding-left: 26px; display: grid; align-items: center; grid-template-columns: 30px 61px 900px 217px auto; font-size: 12px; background: #f0f0f0; border-top: 1px solid #ddd; }
.hthumb { width: 217px; height: 8px; border-radius: 4px; background: #757575; }
.sheetbar svg:last-child { margin-left: 17px; }
.status { height: 23px; flex: none; background: #f3f3f3; padding-left: 11px; display: grid; align-items: center; grid-template-columns: 37px 33px 23px 200px 784px 27px 12px 102px 12px 1fr; white-space: nowrap; }
.status b { font-weight: 600; padding-left: 1px; }
.zoomer { margin: 0 4px; height: 11px; display: flex; justify-content: center; background: linear-gradient(#777, #777) 0 5px / 100% 1px no-repeat; }
.zoomer i { width: 4px; background: #555; }
.pct { padding-left: 6px; }

.taskbar { height: 37px; flex: none; background: linear-gradient(90deg, #303022, #38382e 30%, #3c3b36 45%, #334039 55%, #263f3c 80%, #263d3b); display: grid; align-items: center; grid-template-columns: 45px 270px 45px 48px 46px 45px 47px 46px 45px 386px 33px 64px 31px 17px 63px 37px 12px; color: #eee; }
.tsearch { height: 37px; background: #f2f2f2; color: #333; display: flex; align-items: center; padding-left: 11px; font-size: 13px; border: 1px solid #bbb; border-width: 1px 0; }
.tsearch span { width: 165px; margin-left: 10px; white-space: nowrap; }
.app { height: 37px; display: grid; place-items: center; position: relative; }
.on.w38::after, .cur::after { content: ""; position: absolute; bottom: 0; left: calc(50% - 19px); width: 38px; height: 2px; background: #76b9ed; }
.cur { background: #5f625b; }
.cur::after { left: 0; width: 45px; }
.uv { width: 22px; height: 22px; border-radius: 50%; background: radial-gradient(circle at 40% 20%, #f5b53b, #e87b22); display: grid; place-items: center; font-size: 7.500px; font-weight: 600; }
.wx { font-size: 12.500px; padding-left: 3px; white-space: nowrap; }
.clock { text-align: center; line-height: 17px; font-size: 10.500px; letter-spacing: -.2px; }
.peek { height: 37px; width: 1px; background: #74827f; margin-left: 7px; }

.menu { position: absolute; left: 905px; top: 124px; width: 161px; height: 214px; background: #fff; border: 1px solid #777; box-shadow: 1px 1px 2px #0003; }
.menu > div { height: 26.250px; display: grid; grid-template-columns: 32px 1fr; align-items: center; padding-left: 4px; }
.menu svg { justify-self: center; }
.menu u { text-underline-offset: 1px; }
.menu .off { color: #b5b5b5; }

.banner { position: absolute; left: 189px; top: 580px; width: 902px; height: 103px; background: #000; color: #f6ff5e; font: 35.100px/48px "Liberation Sans", Arial, sans-serif; text-align: center; padding-top: 4px; white-space: nowrap; }
.banner .l1 { margin-right: 10px; }
```
